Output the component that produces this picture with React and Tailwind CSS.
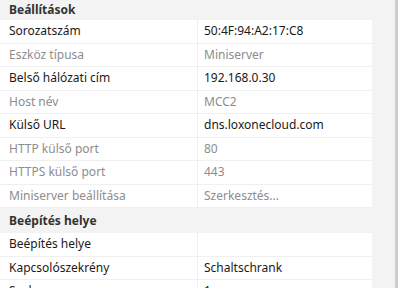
const sections = [
  {
    title: 'Beállítások',
    rows: [
      ['Sorozatszám', '50:4F:94:A2:17:C8', false],
      ['Eszköz típusa', 'Miniserver', true],
      ['Belső hálózati cím', '192.168.0.30', false],
      ['Host név', 'MCC2', true],
      ['Külső URL', 'dns.loxonecloud.com', false],
      ['HTTP külső port', '80', true],
      ['HTTPS külső port', '443', true],
      ['Miniserver beállítása', 'Szerkesztés...', true],
    ],
  },
  {
    title: 'Beépítés helye',
    rows: [
      ['Beépítés helye', '', false],
      ['Kapcsolószekrény', 'Schaltschrank', false],
      ['Szoba', '1', false],
    ],
  },
];

function Row({ label, value, muted }) {
  const tone = muted ? 'text-[#8d8d8d]' : 'text-[#1a1a1a]';
  return (
    <div className={`flex h-[23.5px] items-center bg-white border-b border-[#f0f0f0] ${tone}`}>
      <div className="w-[198px] shrink-0 h-full flex items-center pl-[9px] border-r border-[#efefef]">{label}</div>
      <div className="flex-1 pl-[6px]">{value}</div>
    </div>
  );
}

export default function App() {
  return (
    <div className="h-[288px] w-[398px] overflow-hidden flex bg-[#f3f3f3] text-[12px] font-['Noto_Sans',sans-serif]">
      <div className="w-[372px] flex flex-col">
        {sections.map((s, i) => (
          <div key={s.title}>
            <div className={`${i === 0 ? 'h-[20px]' : 'h-[25px]'} flex items-center pl-[9px] font-bold text-[#333]`}>
              {s.title}
            </div>
            {s.rows.map(([l, v, m]) => (
              <Row key={l} label={l} value={v} muted={m} />
            ))}
          </div>
        ))}
      </div>
      <div className="flex-1" />
      <div className="w-[3px] bg-[#cdcdcd]" />
    </div>
  );
}
